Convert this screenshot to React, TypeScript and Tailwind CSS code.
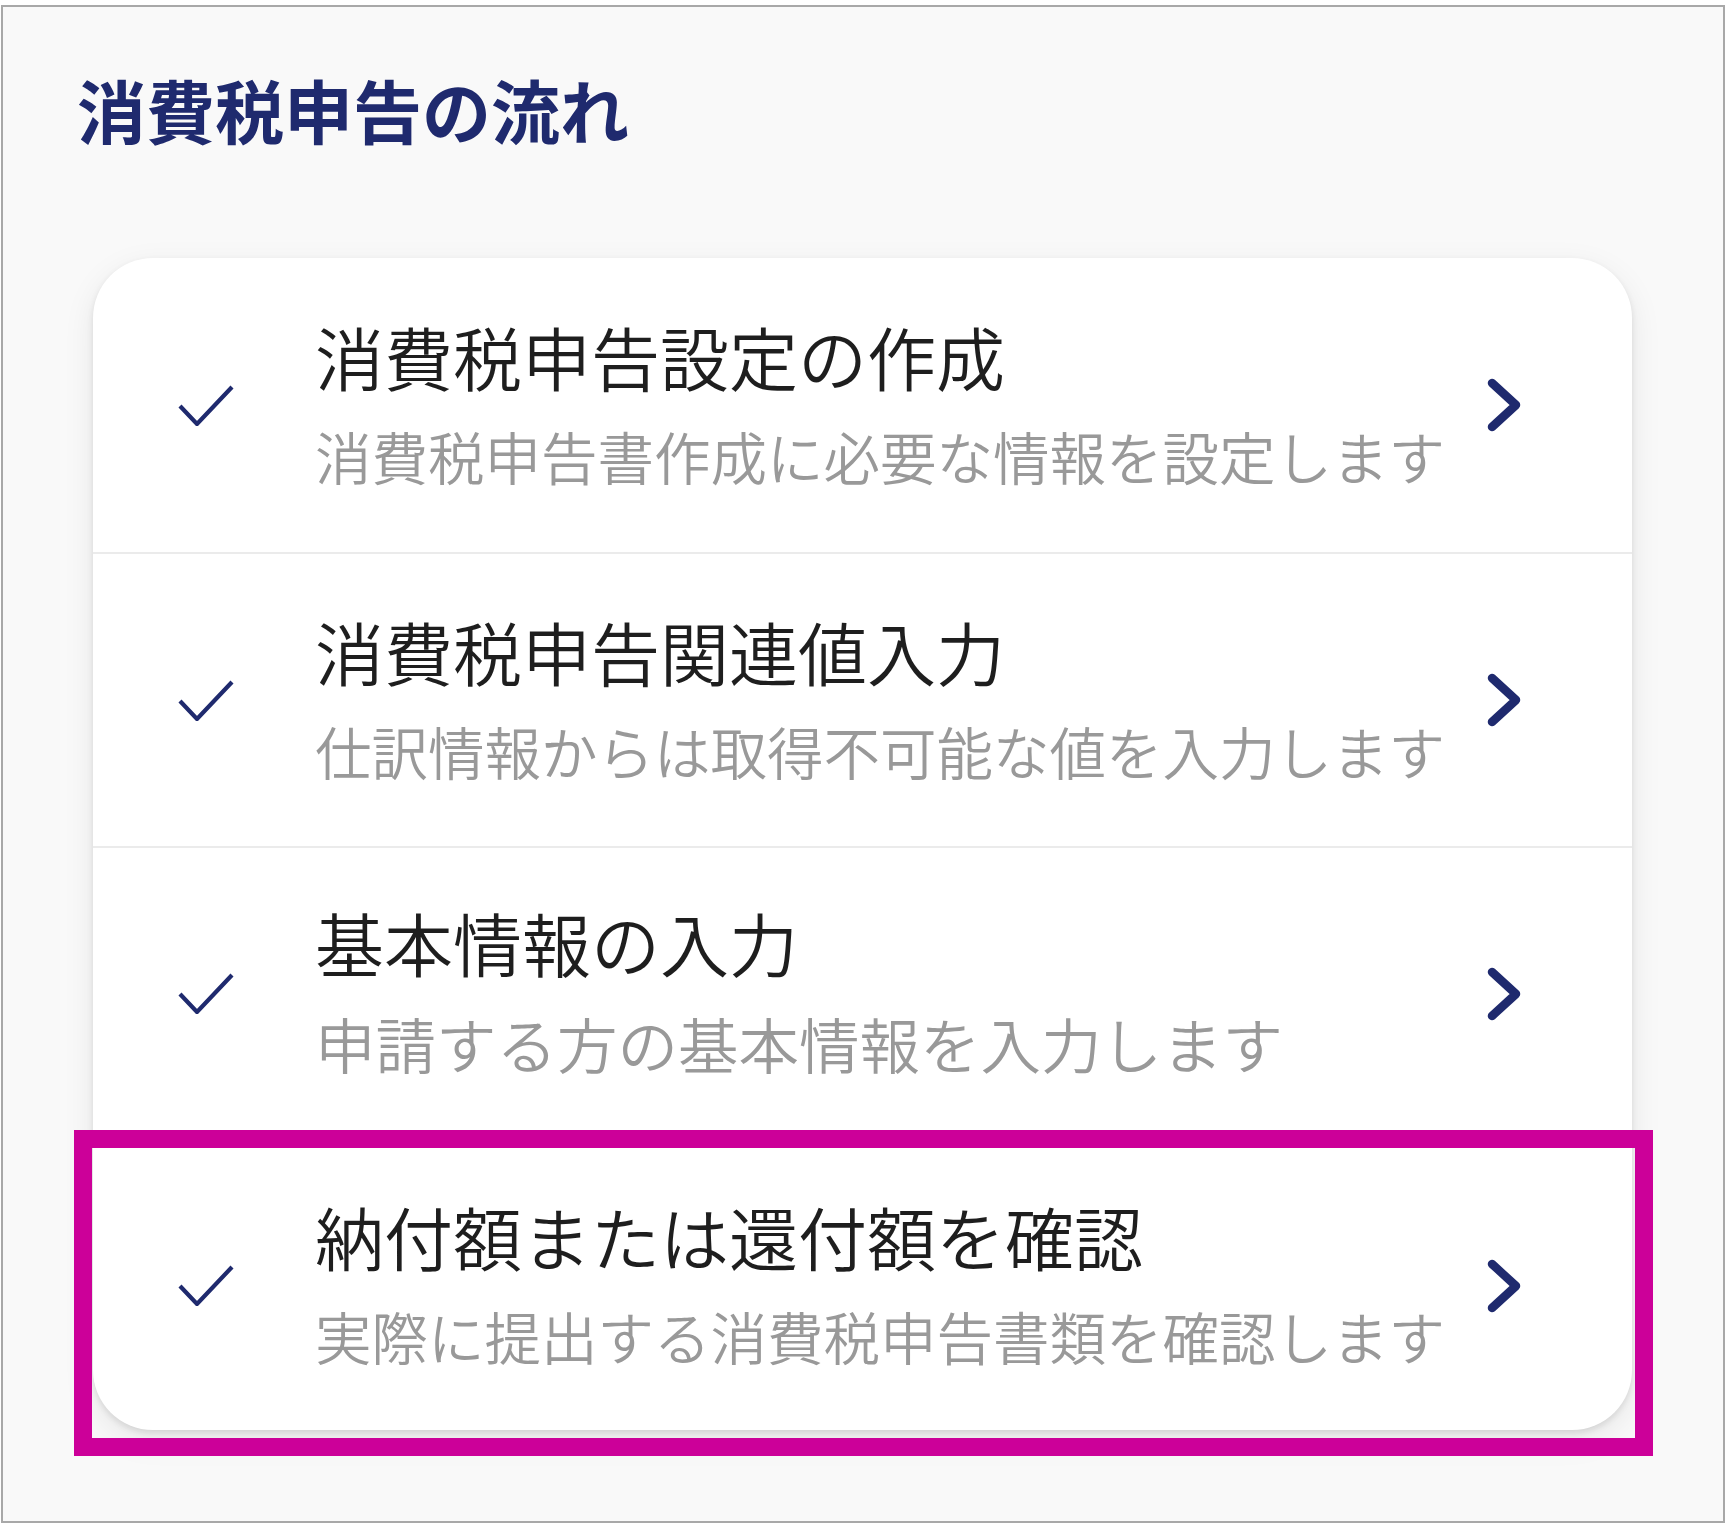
import React from "react";

type Step = { title: string; sub: string; subSize: "sm" | "lg"; h: string; highlight?: boolean };

const steps: Step[] = [
  { title: "消費税申告設定の作成", sub: "消費税申告書作成に必要な情報を設定します", subSize: "sm", h: "h-[296px]" },
  { title: "消費税申告関連値入力", sub: "仕訳情報からは取得不可能な値を入力します", subSize: "sm", h: "h-[294px]" },
  { title: "基本情報の入力", sub: "申請する方の基本情報を入力します", subSize: "lg", h: "h-[293px]" },
  { title: "納付額または還付額を確認", sub: "実際に提出する消費税申告書類を確認します", subSize: "sm", h: "h-[289px]", highlight: true },
];

function Check() {
  return (
    <svg width="56" height="41" viewBox="0 0 56 41" className="shrink-0">
      <polyline points="2,21 19,39 54,2" fill="none" stroke="#1f2a6e" strokeWidth="4.2" strokeLinejoin="miter" />
    </svg>
  );
}

function Chevron() {
  return (
    <svg width="36" height="54" viewBox="0 0 36 54" className="shrink-0">
      <polyline points="6,5 30,27 6,49" fill="none" stroke="#1f2a6e" strokeWidth="8.5" strokeLinecap="round" strokeLinejoin="round" />
    </svg>
  );
}

function Row({ step, last }: { step: Step; last: boolean }) {
  return (
    <div className={`relative flex ${step.h} items-center pl-[85px] pr-[110px] ${last ? "" : "border-b-2 border-[#ebebeb]"}`}>
      <Check />
      <div className="ml-[81px] flex flex-1 flex-col pb-[6px]">
        <div className="whitespace-nowrap text-[69px] font-[350] leading-[69px] text-[#1e1e1e]">{step.title}</div>
        <div
          className={`mt-[36px] whitespace-nowrap font-[350] text-[#999999] ${
            step.subSize === "lg" ? "text-[60.5px] leading-[60px]" : "text-[56.5px] leading-[56px]"
          }`}
        >
          {step.sub}
        </div>
      </div>
      <Chevron />
      {step.highlight && (
        <div className="pointer-events-none absolute -top-[11px] -bottom-[26px] -left-[19px] -right-[21px] border-[18px] border-[#cc0099]" />
      )}
    </div>
  );
}

export default function App() {
  return (
    <div className="h-[1526px] w-[1727px] bg-white pt-[5px] pl-[1px] font-['Noto_Sans_CJK_JP',sans-serif]">
      <div className="h-[1518px] w-[1724px] border-2 border-[#a8a8a8] bg-[#f9f9f9]">
        <h1 className="pl-[74px] pt-[68px] text-[69px] font-bold leading-[68px] text-[#1f2a6e]">消費税申告の流れ</h1>
        <div className="ml-[90px] mt-[115px] w-[1539px] rounded-[60px] bg-white shadow-[0_3px_6px_rgba(0,0,0,0.10),0_10px_32px_rgba(0,0,0,0.08)]">
          {steps.map((s, i) => (
            <Row key={i} step={s} last={i === steps.length - 1} />
          ))}
        </div>
      </div>
    </div>
  );
}
